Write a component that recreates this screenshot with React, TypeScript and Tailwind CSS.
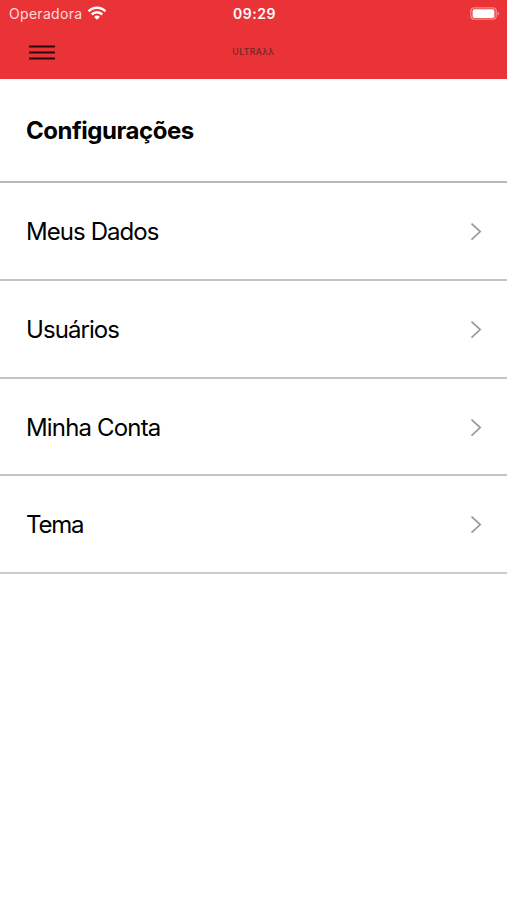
import React from "react";

const rows = [
  { label: "Meus Dados", box: "h-[98px] border-[#c3c3c3]", text: "tracking-[-0.93px]" },
  { label: "Usuários", box: "h-[98px] border-[#c3c3c3]", text: "tracking-[-0.93px]" },
  { label: "Minha Conta", box: "h-[97px] border-[#c3c3c3]", text: "tracking-[-0.83px]" },
  { label: "Tema", box: "h-[98px] border-[#cbcbcb]", text: "tracking-[-1.2px]" },
];

function Wifi() {
  return (
    <svg width="20" height="15" viewBox="0 0 20 15" fill="none" stroke="white" strokeWidth="2.5">
      <path d="M1.6 5.3a11.9 11.9 0 0 1 16.8 0" />
      <path d="M4.7 8.5a7.5 7.5 0 0 1 10.6 0" />
      <path d="M10 13.8 7.1 10.9a4.1 4.1 0 0 1 5.8 0Z" fill="white" stroke="none" />
    </svg>
  );
}

function Battery() {
  return (
    <svg width="30" height="14" viewBox="0 0 30 14" fill="none">
      <rect x="0.8" y="0.8" width="25.4" height="11.4" rx="3.4" stroke="#f58d8f" strokeWidth="1.3" />
      <rect x="2.6" y="2.2" width="21.8" height="8.8" rx="1.8" fill="white" />
      <path d="M27.6 4.3c2 .8 2 3.6 0 4.4Z" fill="#f58d8f" />
    </svg>
  );
}

export default function App() {
  return (
    <main className="h-[900px] w-full bg-white font-['Inter',sans-serif] text-black">
      <header className="h-[79px] bg-[#e93337]">
        <div className="grid h-[27px] grid-cols-3 items-center pl-[9px] pr-[7px] text-white">
          <div className="flex items-center gap-[5px]">
            <span className="text-[14px] tracking-[0.3px] text-[#ffdcdc]">Operadora</span>
            <Wifi />
          </div>
          <span className="text-center text-[14px] font-semibold tracking-[0.5px]">09:29</span>
          <div className="flex justify-end">
            <Battery />
          </div>
        </div>
        <div className="grid h-[50px] grid-cols-3 items-center pl-[29px] pr-[29px]">
          <svg width="26" height="16" viewBox="0 0 26 16" stroke="#2b0b0d" strokeWidth="2">
            <path d="M0 2.4h26M0 8.4h26M0 14.4h26" />
          </svg>
          <span className="text-center text-[8.5px] font-medium leading-none tracking-[0.55px] text-[#6b2629]">ULTRAλλ</span>
        </div>
      </header>
      <div className="flex h-[104px] items-center border-b-2 border-[#b8b8b8] pl-[26px] pt-[2px]">
        <h1 className="text-2xl font-bold tracking-[-0.46px]">Configurações</h1>
      </div>
      <ul>
        {rows.map((row) => (
          <li key={row.label} className={"flex items-center justify-between border-b-2 pl-[26px] pr-[25px] pt-[2px] " + row.box}>
            <span className={"text-2xl " + row.text}>{row.label}</span>
            <svg width="12" height="18" viewBox="0 0 12 18" fill="none" stroke="#999999" strokeWidth="1.7">
              <path d="m1.5 0.6 8.7 8-8.7 8" />
            </svg>
          </li>
        ))}
      </ul>
    </main>
  );
}
